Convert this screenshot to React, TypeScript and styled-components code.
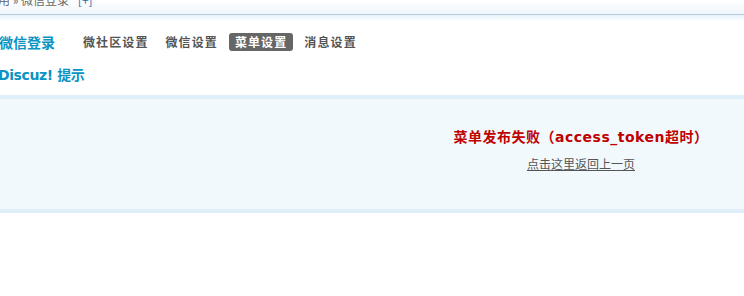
import React from 'react';
import styled, {createGlobalStyle} from 'styled-components';

// page defaults
const GlobalStyle = createGlobalStyle`
  body {
    margin: 0;
    background: #fff;
    font: 12px "Noto Sans CJK SC", "Noto Sans", sans-serif;
    color: #333;
    overflow: hidden;
  }
`;

const Page = styled.div`
  width: 744px;
  height: 296px;
  overflow: hidden;
`;

const TopBar = styled.div`
  height: 14px;
  overflow: hidden;
  background: linear-gradient(#ffffff, #eef6fb);
  border-bottom: 1px solid #b8ccda;
`;

const Crumb = styled.div`
  margin-top: -9px;
  margin-left: -2px;
  line-height: 18px;
  color: #666;
  white-space: nowrap;

  a {
    color: #2c6fb5;
    text-decoration: none;
    margin-left: 6px;
  }
`;

const Glow = styled.div`
  height: 6px;
  background: linear-gradient(#e6f2fa, #ffffff);
`;

const Main = styled.div`
  margin-left: -1px;
`;

const ItemTitle = styled.div`
  display: flex;
  align-items: center;
  margin-top: 12px;
  height: 18px;
`;

const Heading = styled.h3`
  margin: 0 22px 0 0;
  font-size: 14px;
  font-weight: 700;
  color: #0a94c4;
  line-height: 18px;
`;

const Tabs = styled.ul`
  display: flex;
  gap: 5px;
  list-style: none;
  margin: 0;
  padding: 0;
`;

const Tab = styled.li<{ $active?: boolean }>`
  padding: 0 6px;
  height: 18px;
  line-height: 18px;
  border-radius: 3px;
  font-weight: 700;
  letter-spacing: 1.1px;
  color: ${p => (p.$active ? '#fff' : '#555')};
  background: ${p => (p.$active ? '#666' : 'transparent')};
  cursor: pointer;
`;

const Title2 = styled.h3`
  margin: 16px 0 0 -1px;
  font-size: 14px;
  font-weight: 700;
  color: #0a94c4;
  line-height: 17px;
  font-family: "DejaVu Sans", "Noto Sans CJK SC", sans-serif;
  letter-spacing: -0.4px;
`;

const InfoBox = styled.div`
  margin-top: 11px;
  height: 110px;
  border-top: 4px solid #deeffa;
  border-bottom: 4px solid #deeffa;
  background: #f2f9fd;
  box-sizing: content-box;
`;

const Message = styled.div`
  width: 400px;
  margin-left: 381px;
  padding-top: 29px;
  display: flex;
  flex-direction: column;
  align-items: center;
`;

const ErrorText = styled.h4`
  margin: 0;
  font-size: 14px;
  font-weight: 700;
  line-height: 18px;
  color: #bf0000;
  font-family: "DejaVu Sans", "Noto Sans CJK SC", sans-serif;
  letter-spacing: 0.5px;
`;

const BackLink = styled.a`
  margin-top: 10px;
  color: #555;
  text-decoration: underline;
  line-height: 16px;
  cursor: pointer;
`;

const App: React.FC = () => {
    return (
        <Page>
            <GlobalStyle/>
            <TopBar>
                <Crumb>用 » 微信登录 <a>[+]</a></Crumb>
            </TopBar>
            <Glow/>
            <Main>
                <ItemTitle>
                    <Heading>微信登录</Heading>
                    <Tabs>
                        <Tab>微社区设置</Tab>
                        <Tab>微信设置</Tab>
                        <Tab $active>菜单设置</Tab>
                        <Tab>消息设置</Tab>
                    </Tabs>
                </ItemTitle>
                <Title2>Discuz! 提示</Title2>
            </Main>
            <InfoBox>
                <Message>
                    <ErrorText>菜单发布失败（access_token超时）</ErrorText>
                    <BackLink>点击这里返回上一页</BackLink>
                </Message>
            </InfoBox>
        </Page>
    );
};

export default App;
